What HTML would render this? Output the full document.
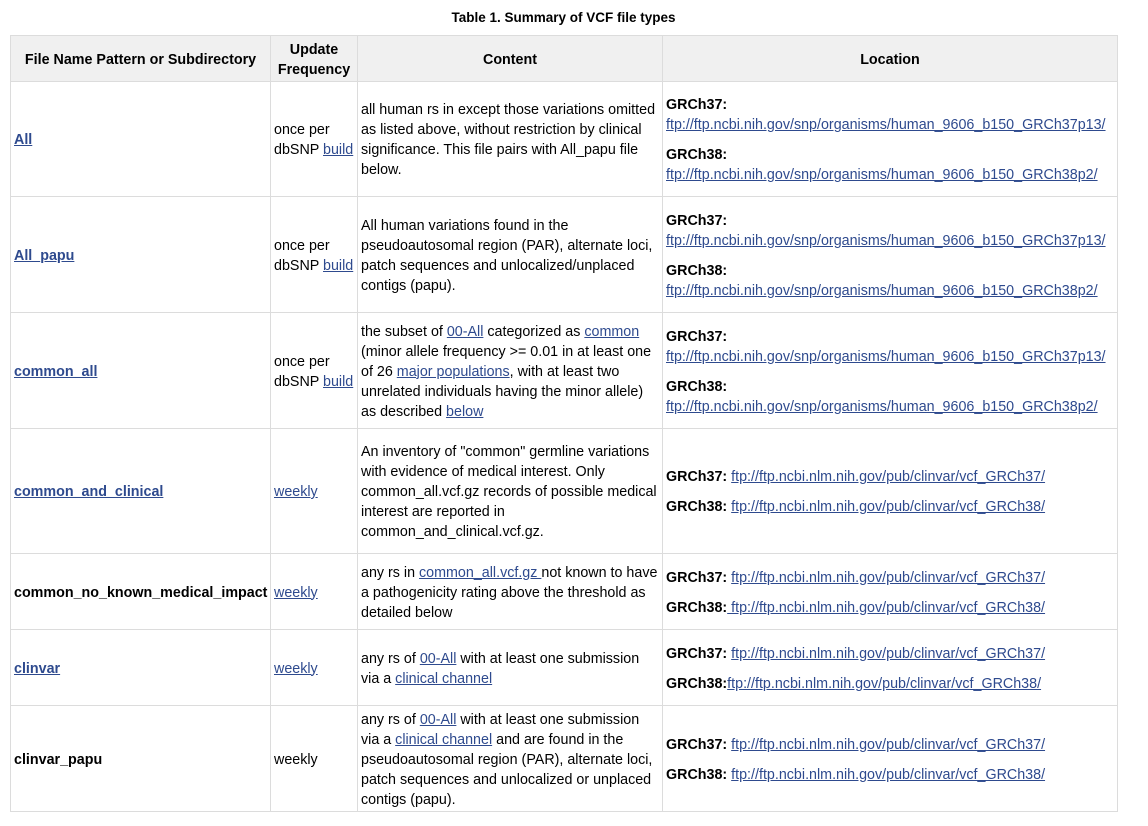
<!DOCTYPE html>
<html><head><meta charset="utf-8"><style>
body{margin:0;background:#fff;font-family:"Liberation Sans",Arial,sans-serif;font-size:14.3px;color:#000;width:1148px;height:826px;overflow:hidden}
.cap{position:absolute;top:10px;left:0;width:1127px;text-align:center;font-weight:bold;font-size:13.5px}
table{position:absolute;left:10px;top:35px;border-collapse:collapse;table-layout:fixed;width:1107px}
td,th{border:1px solid #dcdcdc;padding:2px 3px 0 3px;line-height:20px;vertical-align:middle;text-align:left}
th{background:#f0f0f0;text-align:center;font-weight:bold;height:43px}
a{color:#2e4a8e;text-decoration:underline}
td.n a,td.n{font-weight:bold}
p{margin:0}
.loc p+p,.loc2 p+p{margin-top:10px}
</style></head><body>
<div class="cap">Table 1. Summary of VCF file types</div>
<table>
<colgroup><col style="width:260px"><col style="width:87px"><col style="width:305px"><col style="width:455px"></colgroup>
<tr><th>File Name Pattern or Subdirectory</th><th>Update<br>Frequency</th><th>Content</th><th>Location</th></tr>
<tr style="height:115px"><td class="n"><a>All</a></td><td>once per dbSNP <a>build</a></td><td>all human rs in except those variations omitted as listed above, without restriction by clinical significance. This file pairs with All_papu file below.</td><td class="loc"><p><b>GRCh37:</b><br><a>ftp://ftp.ncbi.nih.gov/snp/organisms/human_9606_b150_GRCh37p13/</a></p><p><b>GRCh38:</b><br><a>ftp://ftp.ncbi.nih.gov/snp/organisms/human_9606_b150_GRCh38p2/</a></p></td></tr>
<tr style="height:116px"><td class="n"><a>All_papu</a></td><td>once per dbSNP <a>build</a></td><td>All human variations found in the pseudoautosomal region (PAR), alternate loci, patch sequences and unlocalized/unplaced contigs (papu).</td><td class="loc"><p><b>GRCh37:</b><br><a>ftp://ftp.ncbi.nih.gov/snp/organisms/human_9606_b150_GRCh37p13/</a></p><p><b>GRCh38:</b><br><a>ftp://ftp.ncbi.nih.gov/snp/organisms/human_9606_b150_GRCh38p2/</a></p></td></tr>
<tr style="height:116px"><td class="n"><a>common_all</a></td><td>once per dbSNP <a>build</a></td><td>the subset of <a>00-All</a> categorized as <a>common</a> (minor allele frequency &gt;= 0.01 in at least one of 26 <a>major populations</a>, with at least two unrelated individuals having the minor allele) as described <a>below</a></td><td class="loc"><p><b>GRCh37:</b><br><a>ftp://ftp.ncbi.nih.gov/snp/organisms/human_9606_b150_GRCh37p13/</a></p><p><b>GRCh38:</b><br><a>ftp://ftp.ncbi.nih.gov/snp/organisms/human_9606_b150_GRCh38p2/</a></p></td></tr>
<tr style="height:125px"><td class="n"><a>common_and_clinical</a></td><td><a>weekly</a></td><td>An inventory of "common" germline variations with evidence of medical interest. Only common_all.vcf.gz records of possible medical interest are reported in common_and_clinical.vcf.gz.</td><td class="loc2"><p><b>GRCh37:</b> <a>ftp://ftp.ncbi.nlm.nih.gov/pub/clinvar/vcf_GRCh37/</a></p><p><b>GRCh38:</b> <a>ftp://ftp.ncbi.nlm.nih.gov/pub/clinvar/vcf_GRCh38/</a></p></td></tr>
<tr style="height:76px"><td class="n">common_no_known_medical_impact</td><td><a>weekly</a></td><td>any rs in <a>common_all.vcf.gz </a>not known to have a pathogenicity rating above the threshold as detailed below</td><td class="loc2"><p><b>GRCh37:</b> <a>ftp://ftp.ncbi.nlm.nih.gov/pub/clinvar/vcf_GRCh37/</a></p><p><b>GRCh38:</b><a> ftp://ftp.ncbi.nlm.nih.gov/pub/clinvar/vcf_GRCh38/</a></p></td></tr>
<tr style="height:76px"><td class="n"><a>clinvar</a></td><td><a>weekly</a></td><td>any rs of <a>00-All</a> with at least one submission via a <a>clinical channel</a></td><td class="loc2"><p><b>GRCh37:</b> <a>ftp://ftp.ncbi.nlm.nih.gov/pub/clinvar/vcf_GRCh37/</a></p><p><b>GRCh38:</b><a>ftp://ftp.ncbi.nlm.nih.gov/pub/clinvar/vcf_GRCh38/</a></p></td></tr>
<tr style="height:106px"><td class="n">clinvar_papu</td><td>weekly</td><td>any rs of <a>00-All</a> with at least one submission via a <a>clinical channel</a> and are found in the pseudoautosomal region (PAR), alternate loci, patch sequences and unlocalized or unplaced contigs (papu).</td><td class="loc2"><p><b>GRCh37:</b> <a>ftp://ftp.ncbi.nlm.nih.gov/pub/clinvar/vcf_GRCh37/</a></p><p><b>GRCh38:</b> <a>ftp://ftp.ncbi.nlm.nih.gov/pub/clinvar/vcf_GRCh38/</a></p></td></tr>
</table>
</body></html>
